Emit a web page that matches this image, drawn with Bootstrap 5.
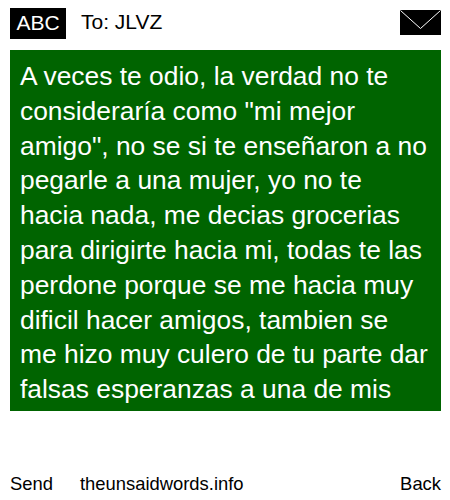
<!doctype html>
<html lang="es"><head><meta charset="utf-8">
<link href="https://cdn.jsdelivr.net/npm/bootstrap@5.3.0/dist/css/bootstrap.min.css" rel="stylesheet">
<style>
html,body{height:500px;overflow:hidden;background:#fff;color:#000}
body{font-family:"Liberation Sans",Arial,sans-serif}
.phone{width:450px;height:500px}
.topbar{height:50px;padding:8px 9px 0 10px}
.abc{width:56px;height:31px;background:#000;color:#fff;font-size:21px;line-height:29px;text-align:center}
.toline{font-size:21px;line-height:27px;margin-left:15px}
.envl{margin-top:2px}
.msg{margin:0 9px 0 10px;width:431px;height:361px;background:#006400;color:#fff;font-size:26.4px;line-height:34.8px;padding:9px 10px 0;overflow:hidden}
.foot{margin-top:60px;padding:0 9px 0 10px;font-size:18.4px;line-height:26px}
.site{margin-left:27px}
</style></head><body>
<div class="phone d-flex flex-column">
<div class="topbar d-flex align-items-start">
<div class="abc">ABC</div><div class="toline flex-grow-1">To: JLVZ</div>
<svg class="envl" width="41" height="25" viewBox="0 0 41 25" aria-hidden="true"><rect width="41" height="25" fill="#000"/><path d="M.5 .5 20.5 18.5 40.5 .5" fill="none" stroke="#fff" stroke-width="1"/></svg>
</div>
<div class="msg">A veces te odio, la verdad no te consideraría como "mi mejor amigo", no se si te enseñaron a no pegarle a una mujer, yo no te hacia nada, me decias grocerias para dirigirte hacia mi, todas te las perdone porque se me hacia muy dificil hacer amigos, tambien se me hizo muy culero de tu parte dar falsas esperanzas a una de mis</div>
<div class="foot d-flex"><span>Send</span><span class="site flex-grow-1">theunsaidwords.info</span><span>Back</span></div>
</div>
</body></html>
